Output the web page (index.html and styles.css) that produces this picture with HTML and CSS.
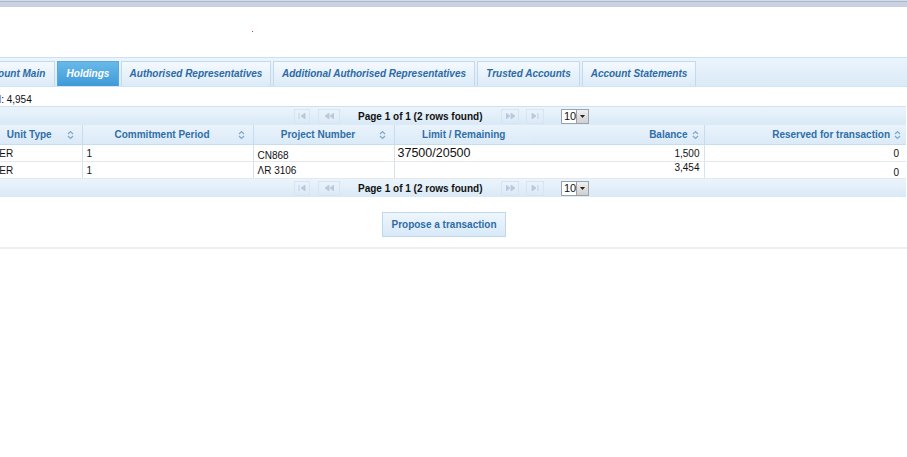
FILE: index.html
```html
<!DOCTYPE html>
<html lang="en">
<head>
<meta charset="utf-8">
<title>Holdings</title>
<link rel="stylesheet" href="styles.css">
</head>
<body>
<div class="topbar"></div>
<div class="page">
  <div class="masthead"><span class="dot"></span></div>
  <nav class="tabs">
    <a class="tab tab-main">Account Main</a>
    <a class="tab tab-holdings tab-active">Holdings</a>
    <a class="tab tab-ar">Authorised Representatives</a>
    <a class="tab tab-aar">Additional Authorised Representatives</a>
    <a class="tab tab-trusted">Trusted Accounts</a>
    <a class="tab tab-statements">Account Statements</a>
  </nav>
  <div class="summary"><span class="summary-label">Total</span>: 4,954</div>
  <div class="grid">
    <div class="pager">
      <span class="pbtn pbtn-first"><svg viewBox="0 0 8 6" width="8" height="6"><path d="M1 0v6M7 0L3 3l4 3z"/></svg></span>
      <span class="pbtn pbtn-prev"><svg viewBox="0 0 9 6" width="9" height="6"><path d="M4 0L0 3l4 3zM9 0L5 3l4 3z"/></svg></span>
      <span class="ptext">Page 1 of 1 (2 rows found)</span>
      <span class="pbtn pbtn-next"><svg viewBox="0 0 9 6" width="9" height="6"><path d="M0 0l4 3-4 3zM5 0l4 3-4 3z"/></svg></span>
      <span class="pbtn pbtn-last"><svg viewBox="0 0 8 6" width="8" height="6"><path d="M7 0v6M1 0l4 3-4 3z"/></svg></span>
      <span class="psel"><span class="psel-val">10</span><span class="psel-btn"><svg viewBox="0 0 5 3" width="5" height="3"><path d="M0 0h5L2.5 3z"/></svg></span></span>
    </div>
    <table class="holdings">
      <colgroup>
        <col class="w-unit"><col class="w-period"><col class="w-project"><col class="w-limit"><col class="w-balance"><col class="w-reserved">
      </colgroup>
      <thead>
        <tr>
          <th><div class="th-inner"><span class="th-label">Unit Type</span><svg class="sort" viewBox="0 0 7 10" width="7" height="10"><path d="M1 4L3.5 1.5 6 4M1 6l2.5 2.5L6 6"/></svg></div></th>
          <th><div class="th-inner"><span class="th-label">Commitment Period</span><svg class="sort" viewBox="0 0 7 10" width="7" height="10"><path d="M1 4L3.5 1.5 6 4M1 6l2.5 2.5L6 6"/></svg></div></th>
          <th><div class="th-inner"><span class="th-label">Project Number</span><svg class="sort" viewBox="0 0 7 10" width="7" height="10"><path d="M1 4L3.5 1.5 6 4M1 6l2.5 2.5L6 6"/></svg></div></th>
          <th class="th-limit">Limit / Remaining</th>
          <th class="th-right th-balance"><div class="th-inner th-inner-right"><span>Balance</span><svg class="sort" viewBox="0 0 7 10" width="7" height="10"><path d="M1 4L3.5 1.5 6 4M1 6l2.5 2.5L6 6"/></svg></div></th>
          <th class="th-right"><div class="th-inner th-inner-right"><span>Reserved for transaction</span><svg class="sort" viewBox="0 0 7 10" width="7" height="10"><path d="M1 4L3.5 1.5 6 4M1 6l2.5 2.5L6 6"/></svg></div></th>
        </tr>
      </thead>
      <tbody>
        <tr>
          <td>CER</td>
          <td>1</td>
          <td class="cell-low">CN868</td>
          <td class="cell-limit">37500/20500</td>
          <td class="num num-balance">1,500</td>
          <td class="num num-last">0</td>
        </tr>
        <tr>
          <td>CER</td>
          <td>1</td>
          <td>ΛR 3106</td>
          <td class="cell-limit"></td>
          <td class="num num-balance cell-high">3,454</td>
          <td class="num num-last cell-low">0</td>
        </tr>
      </tbody>
    </table>
    <div class="pager pager-bottom">
      <span class="pbtn pbtn-first"><svg viewBox="0 0 8 6" width="8" height="6"><path d="M1 0v6M7 0L3 3l4 3z"/></svg></span>
      <span class="pbtn pbtn-prev"><svg viewBox="0 0 9 6" width="9" height="6"><path d="M4 0L0 3l4 3zM9 0L5 3l4 3z"/></svg></span>
      <span class="ptext">Page 1 of 1 (2 rows found)</span>
      <span class="pbtn pbtn-next"><svg viewBox="0 0 9 6" width="9" height="6"><path d="M0 0l4 3-4 3zM5 0l4 3-4 3z"/></svg></span>
      <span class="pbtn pbtn-last"><svg viewBox="0 0 8 6" width="8" height="6"><path d="M7 0v6M1 0l4 3-4 3z"/></svg></span>
      <span class="psel"><span class="psel-val">10</span><span class="psel-btn"><svg viewBox="0 0 5 3" width="5" height="3"><path d="M0 0h5L2.5 3z"/></svg></span></span>
    </div>
  </div>
  <div class="actions"><button class="btn">Propose a transaction</button></div>
  <div class="rule"></div>
</div>
</body>
</html>
```
FILE: styles.css
```css
html, body {
  margin: 0;
  padding: 0;
  overflow: hidden;
  background: #fff;
  font-family: "Liberation Sans", Arial, sans-serif;
  font-size: 10px;
  color: #111;
}

.topbar {
  height: 5px;
  border-top: 1px solid #d3dbe7;
  border-bottom: 1px solid #c6d0e0;
  background: linear-gradient(#a9b8cf 0, #a9b8cf 1px, #c9d2e2 1px, #c9d2e2 100%);
}

.page {
  margin-left: -30px;
  width: 980px;
}

.masthead {
  height: 50px;
  display: flex;
  align-items: flex-start;
}

.dot {
  width: 1px;
  height: 1px;
  background: #d04040;
  margin: 24px 0 0 282px;
}

.tabs {
  display: flex;
  gap: 2px;
  padding-top: 3px;
  height: 25px;
  border-top: 1px solid #cde0f0;
  border-bottom: 1px solid #d2e4f3;
  background: linear-gradient(#ebf5fd, #dbeaf7);
}

.tab {
  box-sizing: border-box;
  height: 25px;
  display: flex;
  align-items: center;
  justify-content: center;
  padding-bottom: 2px;
  border: 1px solid #c3daee;
  border-bottom: none;
  background: linear-gradient(#f4f9fe, #dcebf8);
  color: #2d6aa5;
  font-weight: bold;
  font-style: italic;
  font-size: 10px;
  white-space: nowrap;
}

.tab-main { width: 85px; }
.tab-holdings { width: 62px; }
.tab-ar { width: 150px; }
.tab-aar { width: 202px; }
.tab-trusted { width: 103px; }
.tab-statements { width: 114px; }

.tab-active {
  background: linear-gradient(#68b9e9, #3f9ad8);
  border-color: #56a8de;
  color: #fff;
}

.summary {
  margin: 7px 0 0 10px;
  line-height: 12px;
  height: 12px;
  font-size: 10px;
}

.summary-label {
  color: #6a55a8;
}

.grid {
  margin-left: 18px;
  width: 918px;
}

.pager {
  display: flex;
  align-items: center;
  height: 18px;
  border-top: 1px solid #cfe2f2;
  background: linear-gradient(#ebf4fc, #d9e9f6);
  padding-left: 306px;
}

.pager-bottom {
  border-top: none;
}

.pbtn {
  box-sizing: border-box;
  height: 15px;
  display: flex;
  align-items: center;
  justify-content: center;
  background: linear-gradient(#eaf3fb, #dce9f5);
  border: 1px solid #d6e5f2;
}

.pbtn svg path {
  fill: #b7c9dc;
  stroke: #b7c9dc;
  stroke-width: 0.8;
}

.pbtn-first { width: 16px; }
.pbtn-prev { width: 22px; margin-left: 8px; }
.pbtn-next { width: 18px; margin-left: 4px; }
.pbtn-last { width: 18px; margin-left: 7px; }

.ptext {
  font-weight: bold;
  font-size: 10px;
  color: #111;
  margin-left: 18px;
  width: 139px;
  white-space: nowrap;
}

.psel {
  display: flex;
  box-sizing: border-box;
  width: 28px;
  height: 15px;
  margin-left: 17px;
  border: 1px solid #9aa4ae;
  background: #fff;
}

.psel-val {
  flex: 1;
  font-size: 11px;
  line-height: 13px;
  padding-left: 2px;
  color: #111;
}

.psel-btn {
  width: 11px;
  display: flex;
  align-items: center;
  justify-content: center;
  background: linear-gradient(#f0f0f0, #cfcfcf);
  border-left: 1px solid #a0a0a0;
}

.psel-btn svg path { fill: #222; }

.holdings {
  width: 918px;
  table-layout: fixed;
  border-collapse: collapse;
}

.w-unit { width: 94px; }
.w-period { width: 171px; }
.w-project { width: 141px; }
.w-limit { width: 139px; }
.w-balance { width: 171px; }
.w-reserved { width: 202px; }

.holdings th {
  height: 19px;
  padding: 0;
  border-bottom: 1px solid #c6dcef;
  border-left: 1px solid #c6dcef;
  background: linear-gradient(#e9f3fc, #dbeaf7);
  color: #2f6ea8;
  font-weight: bold;
  font-size: 10px;
  white-space: nowrap;
}

.holdings th:first-child { border-left: none; }
.holdings .th-balance { border-left: none; }

.th-inner {
  display: flex;
  align-items: center;
  padding: 0 8px 0 4px;
}

.th-label {
  flex: 1;
  text-align: center;
}

.th-inner-right {
  justify-content: flex-end;
  gap: 4px;
  padding: 0 5px 0 4px;
}

.th-limit { text-align: center; }

.sort path {
  fill: none;
  stroke: #7ea7cd;
  stroke-width: 1.2;
}

.holdings td {
  height: 16px;
  padding: 0 4px;
  border-bottom: 1px solid #e6e9ec;
  border-left: 1px solid #d9e2ea;
  font-size: 10px;
  color: #111;
  vertical-align: middle;
  white-space: nowrap;
}

.holdings td:first-child { border-left: none; }
.holdings td.num-balance { border-left: none; }

.cell-limit {
  font-size: 12.5px !important;
  padding-left: 3px !important;
}

.num { text-align: right; }
.num-last { padding-right: 7px !important; }

.cell-low { vertical-align: bottom !important; padding-bottom: 0 !important; }
.cell-high { vertical-align: top !important; }

.actions {
  margin: 15px 0 0 412px;
}

.btn {
  box-sizing: border-box;
  width: 124px;
  height: 25px;
  padding: 0;
  border: 1px solid #c0d8ee;
  background: linear-gradient(#eef6fd, #d8e9f8);
  color: #2e6ca6;
  font-family: "Liberation Sans", Arial, sans-serif;
  font-weight: bold;
  font-size: 10px;
}

.rule {
  margin-top: 10px;
  height: 2px;
  background: #efefef;
}
```
